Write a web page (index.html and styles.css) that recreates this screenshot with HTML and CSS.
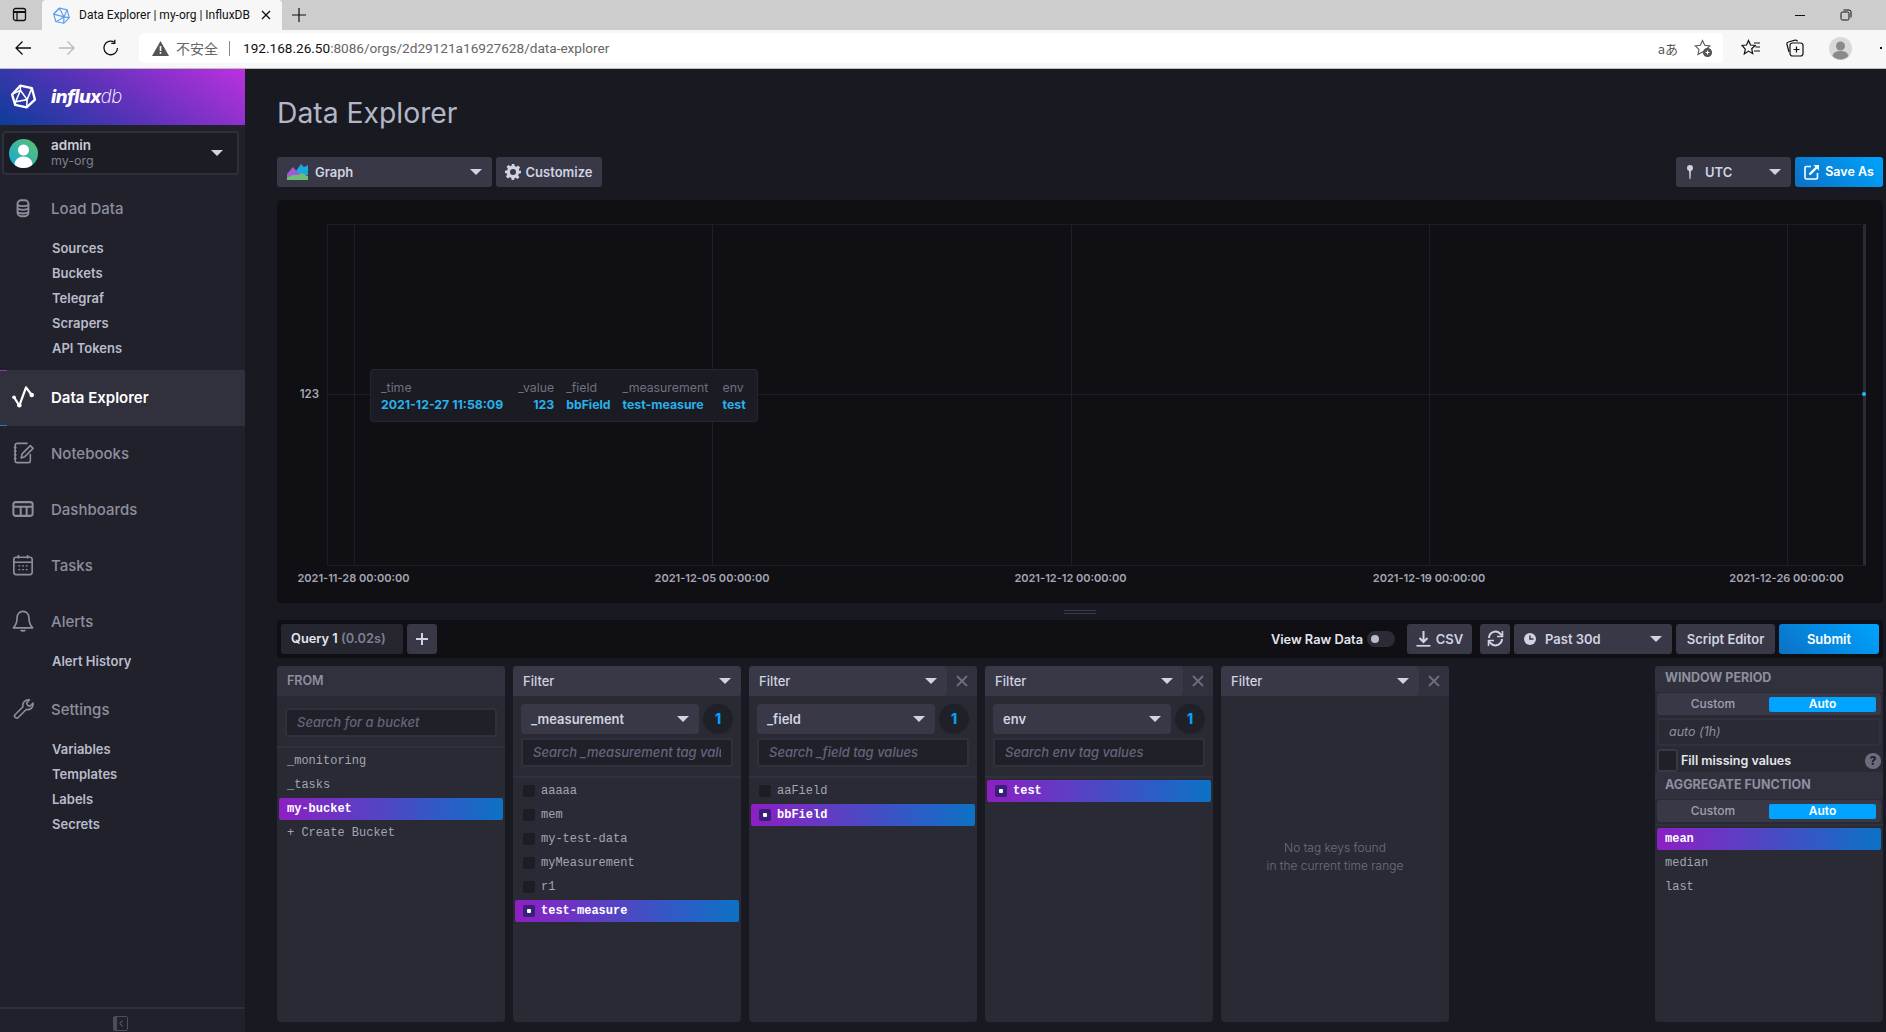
FILE: index.html
```html
<!DOCTYPE html>
<html lang="en">
<head>
<meta charset="utf-8">
<title>Data Explorer | my-org | InfluxDB</title>
<link rel="stylesheet" href="styles.css">
</head>
<body>
<div class="tabstrip">
  <div class="tabstrip-btn">
    <svg width="16" height="16" viewBox="0 0 16 16" fill="none" stroke="#111" stroke-width="1.3"><rect x="1.5" y="1.5" width="12" height="12" rx="2"/><path d="M1.5 5h12" stroke-width="2"/><path d="M5 5v8"/></svg>
  </div>
  <div class="tab">
    <svg class="tab-fav" width="17" height="17" viewBox="0 0 24 24" fill="none" stroke="#5b9cf0" stroke-width="1.6" stroke-linejoin="round"><path d="M9 1.5 20 4l3 11-8 8-11-2.5L1 10z"/><path d="M9 1.5 15.5 14 4 21M1 10l14.5 4 7.5 1M20 4l-4.5 10M15.500 14 15 23M9 1.5 1 10"/></svg>
    <span class="tab-title">Data Explorer | my-org | InfluxDB</span>
    <svg width="10" height="10" viewBox="0 0 10 10" stroke="#111" stroke-width="1.3"><path d="M1 1l8 8M9 1l-8 8"/></svg>
  </div>
  <svg class="tab-new" width="14" height="14" viewBox="0 0 14 14" stroke="#111" stroke-width="1.2"><path d="M7 0v14M0 7h14"/></svg>
  <div class="win-btns">
    <svg width="12" height="12" viewBox="0 0 12 12" stroke="#111"><path d="M1 6.5h10"/></svg>
    <svg width="12" height="12" viewBox="0 0 12 12" fill="none" stroke="#111"><rect x="1" y="3" width="8" height="8" rx="1.5"/><path d="M3.5 1h5.500a2 2 0 0 1 2 2v5.500"/></svg>
  </div>
</div>
<div class="toolbar">
  <svg class="tb-back" width="18" height="18" viewBox="0 0 18 18" fill="none" stroke="#111" stroke-width="1.3"><path d="M17 9H2M8.5 2.5 2 9l6.5 6.5"/></svg>
  <svg class="tb-fwd" width="18" height="18" viewBox="0 0 18 18" fill="none" stroke="#bbb" stroke-width="1.3"><path d="M1 9h15M9.5 2.5 16 9l-6.5 6.5"/></svg>
  <svg class="tb-reload" width="18" height="18" viewBox="0 0 18 18" fill="none" stroke="#111" stroke-width="1.3"><path d="M15.5 9A6.8 6.8 0 1 1 12.5 3.3"/><path d="M12.8 0.8v3.5H9.300"/></svg>
  <div class="omnibox">
    <svg class="warn" width="17" height="15" viewBox="0 0 17 15"><path d="M8.5 0 17 15H0z" fill="#555"/><path d="M7.7 5h1.600v5H7.700zM7.700 11h1.600v1.700H7.700z" fill="#fff"/></svg>
    <span class="insecure">不安全</span>
    <span class="omni-sep"></span>
    <span class="url"><span class="url-host">192.168.26.50</span>:8086/orgs/2d29121a16927628/data-explorer</span>
    <span class="omni-right">
      <span class="translate">aあ</span>
      <svg width="19" height="19" viewBox="0 0 19 19" fill="none" stroke="#555" stroke-width="1.1"><path d="M8.5 1.5l2.200 4.800 5.100.6-3.800 3.500 1 5-4.500-2.500L4 15.400l1-5L1.200 6.900l5.100-.6z"/><circle cx="13.5" cy="13.5" r="4" fill="#555"/><path d="M11.5 13.5h4M13.5 11.5v4" stroke="#fff"/></svg>
    </span>
  </div>
  <div class="tb-right">
    <svg width="20" height="18" viewBox="0 0 20 18" fill="none" stroke="#111" stroke-width="1.2"><path d="M7.5 1.5l2 4.500 4.700.5-3.500 3.200 1 4.800-4.200-2.400L3.300 15l1-4.800L1 6.500 5.500 6zM13 4h6M14.500 8h4.500M13 12h6"/></svg>
    <svg width="18" height="18" viewBox="0 0 18 18" fill="none" stroke="#111" stroke-width="1.2"><rect x="4" y="4" width="13" height="13" rx="2.5"/><path d="M3 13 1 5.500a2 2 0 0 1 1.500-2.500L9 1.200a2 2 0 0 1 2.500 1.300M10.500 7.500v6M7.500 10.500h6"/></svg>
    <svg class="profile" width="23" height="23" viewBox="0 0 23 23"><circle cx="11.5" cy="11.5" r="11.5" fill="#d9d9d9"/><circle cx="11.5" cy="9" r="4.5" fill="#8a8a8a"/><path d="M3.5 19c1-4 4-5 8-5s7 1 8 5a11 11 0 0 1-16 0z" fill="#8a8a8a"/></svg>
    <span class="more-dots"><i></i><i></i></span>
  </div>
</div>

<div class="app">
  <aside class="sidebar">
    <div class="brand">
      <svg class="brand-logo" width="25" height="25" viewBox="0 0 24 24" fill="none" stroke="#fff" stroke-width="2.2" stroke-linejoin="round"><path d="M9 1.5 20 4l3 11-8 7.500-11-2.500L1 10z"/><path d="M9 6 15.5 15 4.500 17zM9 1.500V6M20 4l-4.500 11M15.500 15l-.5 7.500M4.500 17 4 20M1 10l8-4" stroke-width="1.5"/></svg>
      <span class="brand-name"><b>influx</b>db</span>
    </div>
    <div class="user">
      <svg class="avatar" width="29" height="29" viewBox="0 0 29 29">
        <defs><linearGradient id="ava" x1="1" y1="0" x2="0" y2="1"><stop offset="0" stop-color="#5ec46f"/><stop offset="1" stop-color="#14a7d8"/></linearGradient><clipPath id="avac"><circle cx="14.5" cy="14.5" r="14.5"/></clipPath></defs>
        <circle cx="14.5" cy="14.5" r="14.5" fill="url(#ava)"/>
        <g clip-path="url(#avac)" fill="#fff"><circle cx="14.5" cy="11" r="5.5"/><ellipse cx="14.5" cy="25" rx="9" ry="7.5"/></g>
      </svg>
      <div class="user-text"><div class="user-name">admin</div><div class="user-org">my-org</div></div>
      <span class="caret user-caret"></span>
    </div>
    <nav class="nav">
      <a class="nav-item">
        <svg class="nav-ico" viewBox="0 0 24 24" fill="none" stroke="#8d8f9f" stroke-width="2"><rect x="6" y="3.500" width="12" height="17.500" rx="4"/><path d="M6 8.500c2 2 10 2 12 0M6 12.500c2 2 10 2 12 0M6 16.500c2 2 10 2 12 0"/></svg>
        <span>Load Data</span>
      </a>
      <div class="sub sub-a"><a>Sources</a><a>Buckets</a><a>Telegraf</a><a>Scrapers</a><a>API Tokens</a></div>
      <a class="nav-item active">
        <svg class="nav-ico" viewBox="0 0 24 24" fill="none" stroke="#fff" stroke-width="2.4" stroke-linecap="round" stroke-linejoin="round"><path d="M2.200 12.300 8 21.500 15.300 1.500l6.200 8.300"/><g fill="#fff" stroke="none"><circle cx="2.200" cy="12.300" r="2"/><circle cx="8" cy="21" r="2.500"/><circle cx="21.500" cy="9.800" r="2.500"/></g></svg>
        <span>Data Explorer</span>
      </a>
      <a class="nav-item">
        <svg class="nav-ico" viewBox="0 0 24 24" fill="none" stroke="#8d8f9f" stroke-width="1.7" stroke-linejoin="round"><path d="M17 1.500H5.500a2 2 0 0 0-2 2v17a2 2 0 0 0 2 2H18a2 2 0 0 0 2-2V13"/><path d="M2 6h3M2 10h3M2 14h3M2 18h3"/><path d="M10 17.500l1-4.500 9-9 3 3-9 9z"/></svg>
        <span>Notebooks</span>
      </a>
      <a class="nav-item">
        <svg class="nav-ico" viewBox="0 0 24 24" fill="none" stroke="#8d8f9f" stroke-width="2.2"><rect x="1.500" y="4.500" width="21" height="15" rx="2.500"/><path d="M1.500 9.500h21M9.500 9.500v10M16 9.500v10"/></svg>
        <span>Dashboards</span>
      </a>
      <a class="nav-item">
        <svg class="nav-ico" viewBox="0 0 24 24" fill="none" stroke="#8d8f9f" stroke-width="1.8"><rect x="2" y="3.500" width="20" height="19" rx="2.500"/><path d="M2 9h20M7 1v4M17 1v4"/><path d="M7 13h2M11 13h2M15 13h2M7 17h2M11 17h2M15 17h2" stroke-width="1.500"/></svg>
        <span>Tasks</span>
      </a>
      <a class="nav-item">
        <svg class="nav-ico" viewBox="0 0 24 24" fill="none" stroke="#8d8f9f" stroke-width="1.8" stroke-linejoin="round"><path d="M12 1.500c-4 0-6.500 3-6.500 7 0 6-1 8-4 11h21c-3-3-4-5-4-11 0-4-2.500-7-6.500-7z"/><path d="M9.500 22c1 1 4 1 5 0"/></svg>
        <span>Alerts</span>
      </a>
      <div class="sub sub-b"><a>Alert History</a></div>
      <a class="nav-item">
        <svg class="nav-ico" viewBox="0 0 24 24" fill="none" stroke="#8d8f9f" stroke-width="1.7" stroke-linejoin="round"><path d="M3 18.500 12 9.500c-1-4 2-8 7-7.500l-3 3.500 1 2.500 2.500 1L23 5.500c.5 5-3.500 8-7.500 7l-9 9c-1.500 1.500-5-1.500-3.500-3z"/></svg>
        <span>Settings</span>
      </a>
      <div class="sub sub-c"><a>Variables</a><a>Templates</a><a>Labels</a><a>Secrets</a></div>
    </nav>
    <div class="collapse">
      <svg width="15" height="15" viewBox="0 0 15 15" fill="none"><rect x="0.5" y="0.5" width="14" height="14" rx="1.5" stroke="#4b4c5c"/><rect x="0.5" y="0.5" width="3.5" height="14" fill="#4b4c5c"/><path d="M9.500 4.500 7 7.500l2.500 3" stroke="#6b6d7e"/></svg>
    </div>
  </aside>

  <main class="main">
    <h1 class="page-title">Data Explorer</h1>
    <div class="controls">
      <button class="btn dd graph-dd">
        <svg class="graph-ico" width="21" height="16" viewBox="0 0 21 16"><path d="M0 11 5 5l4 2 5-7 3 3 4-2v10H0z" fill="#1ba6dc"/><path d="M0 10 6 3l5 6 4 1 6 2v4H0z" fill="#a657d8"/><path d="M0 13.500l6-2.500 5 0 4-2 6 3.500V16H0z" fill="#6cbf73"/></svg>
        <span class="grow">Graph</span><span class="caret"></span>
      </button>
      <button class="btn customize">
        <svg width="16" height="16" viewBox="0 0 24 24" fill="#d0d3e0"><path fill-rule="evenodd" d="M10 0h4l.7 3.400 2.200.9L19.800 2.400l2.800 2.800-1.900 2.900.9 2.200L24 10v4l-3.400.7-.9 2.200 1.900 2.900-2.800 2.800-2.900-1.900-2.200.9L14 24h-4l-.7-3.400-2.200-.9-2.900 1.900-2.800-2.800 1.900-2.900-.9-2.200L0 14v-4l3.400-.7.9-2.200L2.400 4.200l2.800-2.800 2.900 1.900 2.200-.9zM12 7.500a4.500 4.500 0 1 0 0 9 4.500 4.500 0 0 0 0-9z"/></svg>
        <span>Customize</span>
      </button>
      <span class="spacer"></span>
      <button class="btn dd utc-dd">
        <svg width="8" height="14" viewBox="0 0 8 14" fill="#cfd2df"><circle cx="4" cy="3" r="3"/><path d="M3 5h2l-.5 9h-1z"/></svg>
        <span class="grow utc-label">UTC</span><span class="caret"></span>
      </button>
      <button class="btn primary saveas">
        <svg width="16" height="16" viewBox="0 0 16 16" fill="none" stroke="#fff" stroke-width="1.6"><path d="M13.500 9v4.500a1.500 1.500 0 0 1-1.500 1.500H2.500A1.500 1.500 0 0 1 1 13.500V4a1.500 1.500 0 0 1 1.500-1.500H7"/><path d="M5.500 10.500 13 3" stroke-width="2.4"/><path d="M9.500 1h5.500v5.500z" fill="#fff" stroke="none"/></svg>
        <span>Save As</span>
      </button>
    </div>

    <section class="chart">
      <div class="plot">
        <i class="grid-v" style="left:25.5px"></i>
        <i class="grid-v" style="left:384px"></i>
        <i class="grid-v" style="left:742.5px"></i>
        <i class="grid-v" style="left:1101px"></i>
        <i class="grid-v" style="left:1458.5px"></i>
        <i class="grid-h"></i>
        <i class="point"></i>
        <span class="y-tick">123</span>
        <span class="x-tick" style="left:25.5px">2021-11-28 00:00:00</span>
        <span class="x-tick" style="left:384px">2021-12-05 00:00:00</span>
        <span class="x-tick" style="left:742.5px">2021-12-12 00:00:00</span>
        <span class="x-tick" style="left:1101px">2021-12-19 00:00:00</span>
        <span class="x-tick" style="left:1458.5px">2021-12-26 00:00:00</span>
        <div class="tooltip">
          <div class="tt-col"><span>_time</span><b>2021-12-27 11:58:09</b></div>
          <div class="tt-col tt-right"><span>_value</span><b>123</b></div>
          <div class="tt-col"><span>_field</span><b>bbField</b></div>
          <div class="tt-col tt-meas"><span>_measurement</span><b>test-measure</b></div>
          <div class="tt-col"><span>env</span><b>test</b></div>
        </div>
      </div>
    </section>

    <div class="resizer"><i></i><i></i></div>

    <div class="query-bar">
      <div class="query-tab">Query 1 <span class="query-time">(0.02s)</span></div>
      <button class="btn add-q"><svg width="12" height="12" viewBox="0 0 12 12" stroke="#d0d3e0" stroke-width="2"><path d="M6 0v12M0 6h12"/></svg></button>
      <span class="spacer"></span>
      <span class="raw-label">View Raw Data</span>
      <span class="raw-toggle"><i></i></span>
      <button class="btn csv">
        <svg width="15" height="16" viewBox="0 0 15 16" fill="none" stroke="#d0d3e0" stroke-width="1.7"><path d="M7.500 0v10M3.500 7l4 4 4-4" stroke-width="2"/><path d="M0.500 14.800h14"/></svg>
        <span>CSV</span>
      </button>
      <button class="btn refresh">
        <svg width="17" height="17" viewBox="0 0 17 17" fill="none" stroke="#d0d3e0" stroke-width="2"><path d="M2 8a6.500 6.500 0 0 1 11-4.500L15 5.500M15 9a6.500 6.500 0 0 1-11 4.500L2 11.500"/><path d="M15.500 1v5.500H10M1.500 16v-5.500H7" stroke-width="1.6"/></svg>
      </button>
      <button class="btn dd past">
        <svg width="12" height="12" viewBox="0 0 12 12"><circle cx="6" cy="6" r="6" fill="#d0d3e0"/><path d="M6 2.500V6h3.500" fill="none" stroke="#383846" stroke-width="1.5"/></svg>
        <span class="grow">Past 30d</span><span class="caret"></span>
      </button>
      <button class="btn script">Script Editor</button>
      <button class="btn primary submit">Submit</button>
    </div>

    <div class="builder">
      <section class="card card-from">
        <header class="card-head from-head">FROM</header>
        <div class="card-tools"><div class="search"><span>Search for a bucket</span></div></div>
        <ul class="list">
          <li>_monitoring</li>
          <li>_tasks</li>
          <li class="sel">my-bucket</li>
          <li>+ Create Bucket</li>
        </ul>
      </section>

      <section class="card">
        <header class="card-head"><div class="head-dd"><span class="grow">Filter</span><span class="caret"></span></div></header>
        <div class="card-tools">
          <div class="key-row"><div class="key-dd"><span class="grow">_measurement</span><span class="caret"></span></div><span class="badge">1</span></div>
          <div class="search"><span>Search _measurement tag values</span></div>
        </div>
        <ul class="list check">
          <li><i class="box"></i>aaaaa</li>
          <li><i class="box"></i>mem</li>
          <li><i class="box"></i>my-test-data</li>
          <li><i class="box"></i>myMeasurement</li>
          <li><i class="box"></i>r1</li>
          <li class="sel"><i class="box"></i>test-measure</li>
        </ul>
      </section>

      <section class="card">
        <header class="card-head"><div class="head-dd short"><span class="grow">Filter</span><span class="caret"></span></div><span class="close"><svg width="12" height="12" viewBox="0 0 12 12" stroke="#6b6d7e" stroke-width="2"><path d="M1 1l10 10M11 1 1 11"/></svg></span></header>
        <div class="card-tools">
          <div class="key-row"><div class="key-dd"><span class="grow">_field</span><span class="caret"></span></div><span class="badge">1</span></div>
          <div class="search"><span>Search _field tag values</span></div>
        </div>
        <ul class="list check">
          <li><i class="box"></i>aaField</li>
          <li class="sel"><i class="box"></i>bbField</li>
        </ul>
      </section>

      <section class="card">
        <header class="card-head"><div class="head-dd short"><span class="grow">Filter</span><span class="caret"></span></div><span class="close"><svg width="12" height="12" viewBox="0 0 12 12" stroke="#6b6d7e" stroke-width="2"><path d="M1 1l10 10M11 1 1 11"/></svg></span></header>
        <div class="card-tools">
          <div class="key-row"><div class="key-dd"><span class="grow">env</span><span class="caret"></span></div><span class="badge">1</span></div>
          <div class="search"><span>Search env tag values</span></div>
        </div>
        <ul class="list check">
          <li class="sel"><i class="box"></i>test</li>
        </ul>
      </section>

      <section class="card card-empty">
        <header class="card-head"><div class="head-dd short"><span class="grow">Filter</span><span class="caret"></span></div><span class="close"><svg width="12" height="12" viewBox="0 0 12 12" stroke="#6b6d7e" stroke-width="2"><path d="M1 1l10 10M11 1 1 11"/></svg></span></header>
        <div class="empty">No tag keys found<br>in the current time range</div>
      </section>

      <span class="spacer"></span>

      <section class="card card-agg">
        <div class="agg-title agg-first">WINDOW PERIOD</div>
        <div class="seg"><span>Custom</span><span class="on">Auto</span></div>
        <div class="agg-input">auto (1h)</div>
        <div class="fill-row"><i class="fill-box"></i><span class="grow">Fill missing values</span><span class="help">?</span></div>
        <div class="agg-title agg-second">AGGREGATE FUNCTION</div>
        <div class="seg"><span>Custom</span><span class="on">Auto</span></div>
        <ul class="list agg-list">
          <li class="sel">mean</li>
          <li>median</li>
          <li>last</li>
        </ul>
      </section>
    </div>
  </main>
</div>
</body>
</html>
```

FILE: styles.css
```css
* { box-sizing: border-box; }
html, body { margin: 0; height: 100%; overflow: hidden; }
body {
  width: 1886px;
  height: 1032px;
  display: flex;
  flex-direction: column;
  font-family: Inter, "Noto Sans", sans-serif;
  background: #181921;
  color: #d0d3e0;
}
ul { list-style: none; margin: 0; padding: 0; }
button { font: inherit; border: 0; margin: 0; }
i { font-style: normal; display: block; }

/* browser chrome */
.tabstrip {
  height: 30px;
  background: #cdcdcd;
  display: flex;
  align-items: flex-end;
  flex: none;
}
.tabstrip-btn {
  width: 42px;
  height: 30px;
  display: flex;
  align-items: center;
  padding-left: 12px;
}
.tab {
  width: 240px;
  height: 30px;
  background: #f7f7f7;
  border-radius: 4px 4px 0 0;
  display: flex;
  align-items: center;
  padding: 0 11px;
  font: 12px Roboto, sans-serif;
  color: #111;
}
.tab-fav { flex: none; }
.tab-title { flex: 1; padding-left: 9px; white-space: nowrap; }
.tab-new { margin: 0 0 8px 10px; }
.win-btns {
  margin-left: auto;
  height: 30px;
  width: 92px;
  display: flex;
  align-items: center;
  gap: 34px;
}
.toolbar {
  height: 39px;
  background: #f7f7f7;
  border-bottom: 1px solid #bfbfbf;
  display: flex;
  align-items: center;
  padding: 0 0 2px 14px;
  flex: none;
  overflow: hidden;
  font: 13px Roboto, sans-serif;
}
.toolbar svg { flex: none; }
.tb-fwd { margin-left: 26px; }
.tb-reload { margin-left: 26px; }
.omnibox {
  margin-left: 19px;
  width: 1584px;
  flex: none;
  height: 30px;
  background: #fff;
  border-radius: 5px;
  display: flex;
  align-items: center;
  padding: 0 10px 0 13px;
  color: #666;
}
.insecure { font-family: "Noto Sans CJK SC", sans-serif; font-size: 14px; color: #666; margin-left: 7px; }
.omni-sep { width: 1px; height: 15px; background: #888; margin: 0 13px 0 11px; }
.url { white-space: nowrap; font-size: 13.6px; }
.url-host { color: #111; }
.omni-right { margin-left: auto; display: flex; align-items: center; gap: 16px; }
.translate { font-family: "Noto Sans CJK JP", sans-serif; font-size: 13px; color: #555; }
.tb-right { display: flex; align-items: center; margin-left: 18px; gap: 25px; flex: none; }
.more-dots { display: flex; gap: 4px; margin-left: 3px; }
.more-dots i { width: 2px; height: 2px; background: #111; }

/* app */
.app { flex: 1; display: flex; min-height: 0; }
.sidebar {
  width: 245px;
  flex: none;
  background: #20212a;
  display: flex;
  flex-direction: column;
}
.brand {
  height: 56px;
  background: linear-gradient(35deg, #0b3d99 0%, #5a32b8 45%, #bb31df 100%);
  display: flex;
  align-items: center;
  padding: 0 0 1px 11px;
  flex: none;
}
.brand-name {
  margin-left: 15px;
  font-size: 18.5px;
  font-style: italic;
  font-weight: 200;
  color: #fff;
  letter-spacing: -0.5px;
  padding-bottom: 1px;
}
.brand-name b { font-weight: 800; }
.user {
  margin: 6px 6px 0 2px;
  height: 44px;
  border: 2px solid #2e2f3a;
  border-radius: 4px;
  background: #1c1d24;
  display: flex;
  align-items: center;
  padding-left: 5px;
  flex: none;
}
.user-text { flex: 1; margin-left: 13px; line-height: 16px; }
.user-name { font-size: 13.5px; font-weight: 600; color: #c9ccd9; }
.user-org { font-size: 12.5px; font-weight: 400; color: #7d7f8f; }
.user-caret { margin-right: 14px; }
.caret {
  flex: none;
  width: 0;
  height: 0;
  border-left: 6px solid transparent;
  border-right: 6px solid transparent;
  border-top: 6px solid #d0d3e0;
}
.nav { flex: 1; padding-top: 5px; }
.nav-item {
  height: 56px;
  display: flex;
  align-items: center;
  padding: 0 0 2px 12px;
  font-size: 15px;
  font-weight: 500;
  color: #8d8f9f;
}
.nav-item:first-child { padding-bottom: 0; }
.nav-ico { width: 22px; height: 22px; flex: none; margin-right: 17px; }
.nav-item.active {
  position: relative;
  background: #30313d;
  color: #fff;
  font-weight: 600;
}
.nav-item.active::before, .nav-item.active::after {
  content: "";
  position: absolute;
  left: 0;
  width: 7px;
  height: 1px;
}
.nav-item.active::before { top: 0; background: #9b2bc8; }
.nav-item.active::after { bottom: 0; background: #0a84d8; }
.sub a {
  display: block;
  height: 25px;
  line-height: 25px;
  padding-left: 52px;
  font-size: 13px;
  font-weight: 600;
  color: #b9bccb;
}
.sub-a { margin-bottom: 9px; }
.sub-b { margin: -1px 0 8px; }
.sub-c { margin-top: -1px; }
.collapse {
  height: 25px;
  border-top: 2px solid #30313d;
  display: flex;
  align-items: center;
  justify-content: center;
  padding: 6px 5px 0 0;
  flex: none;
}

/* main */
.main { flex: 1; min-width: 0; padding: 0 3px 10px 32px; display: flex; flex-direction: column; }
.page-title {
  margin: 0;
  height: 88px;
  padding-top: 26px;
  font-size: 28.3px;
  line-height: 36px;
  font-weight: 400;
  color: #b3b6c6;
}
.btn {
  height: 30px;
  border-radius: 3px;
  background: #383846;
  color: #d0d3e0;
  font-size: 13px;
  font-weight: 600;
  display: flex;
  align-items: center;
  justify-content: center;
  gap: 5px;
  padding: 0 0 1px;
  flex: none;
}
.btn.dd { justify-content: flex-start; padding: 0 10px 1px; }
.grow { flex: 1; text-align: left; }
.spacer { flex: 1; }
.primary { background: linear-gradient(45deg, #0b72c5, #00a3ff); color: #fff; }
.controls { display: flex; gap: 4px; height: 30px; flex: none; }
.graph-dd { width: 215px; }
.graph-dd .grow { margin-left: 2px; }
.customize { width: 106px; padding-right: 1px; }
.utc-dd { width: 115px; }
.utc-label { margin-left: 6px; }
.saveas { width: 88px; font-size: 12.5px; }

.chart {
  margin-top: 13px;
  height: 403px;
  flex: none;
  background: #0f0f14;
  border-radius: 4px;
  padding: 24px 17px 37px 50px;
}
.plot {
  position: relative;
  height: 100%;
  border: 1px solid #1c1c23;
  border-right: 3px solid #2a2b34;
}
.grid-v { position: absolute; top: 0; bottom: 0; width: 1px; background: #1f2027; }
.grid-h { position: absolute; left: 0; right: 0; top: 169px; height: 1px; background: #1f2027; }
.point {
  position: absolute;
  right: -3px;
  top: 167px;
  width: 4px;
  height: 4px;
  border-radius: 50%;
  background: #22b7f5;
}
.y-tick {
  position: absolute;
  right: 100%;
  margin-right: 9px;
  top: 162px;
  font-size: 11.5px;
  line-height: 15px;
  font-weight: 600;
  color: #a5a7b4;
}
.x-tick {
  position: absolute;
  top: 100%;
  transform: translateX(-50%);
  margin-top: 6px;
  font-size: 11px;
  line-height: 15px;
  font-weight: 600;
  color: #a5a7b4;
  white-space: nowrap;
}
.tooltip {
  position: absolute;
  left: 42px;
  top: 144px;
  width: 388px;
  height: 53px;
  background: #1a1b23;
  border: 1px solid #24252e;
  border-radius: 3px;
  padding: 9px 0 0 10px;
  display: flex;
  gap: 12px;
  font-size: 12.3px;
  line-height: 17px;
  white-space: nowrap;
}
.tt-col { display: flex; flex-direction: column; }
.tt-col span { color: #6f7080; font-weight: 400; }
.tt-col b { color: #28b1eb; font-weight: 700; }
.tt-right { text-align: right; min-width: 39px; }
.tt-meas { min-width: 88px; }

.resizer {
  height: 17px;
  flex: none;
  display: flex;
  flex-direction: column;
  align-items: center;
  justify-content: center;
  gap: 2px;
}
.resizer i { width: 32px; height: 1px; background: #383846; }

.query-bar {
  height: 38px;
  background: #0f0f14;
  border-radius: 4px;
  display: flex;
  align-items: center;
  padding: 0 4px;
  gap: 4px;
  flex: none;
}
.query-tab {
  width: 122px;
  height: 30px;
  background: #252630;
  border-radius: 3px;
  font-size: 12.8px;
  font-weight: 600;
  color: #e4e6ee;
  line-height: 29px;
  padding-left: 10px;
}
.query-time { color: #7d7f8f; }
.add-q { width: 30px; }
.raw-label { font-size: 12.8px; font-weight: 600; color: #e4e6ee; }
.raw-toggle {
  width: 28px;
  height: 16px;
  background: #2a2b34;
  border-radius: 8px;
  padding: 4px;
  margin-right: 8px;
}
.raw-toggle i { width: 8px; height: 8px; border-radius: 50%; background: #b9bccb; }
.csv { width: 65px; margin-right: 4px; }
.refresh { width: 30px; }
.past { width: 158px; }
.past .grow { margin-left: 4px; }
.script { width: 99px; }
.submit { width: 100px; }

/* builder */
.builder { margin-top: 8px; flex: 1; min-height: 0; display: flex; gap: 8px; }
.card {
  width: 228px;
  flex: none;
  background: #292a33;
  border-radius: 4px;
  overflow: hidden;
  display: flex;
  flex-direction: column;
}
.card-head {
  height: 30px;
  background: #30313c;
  display: flex;
  align-items: center;
  flex: none;
}
.from-head {
  padding: 0 0 2px 10px;
  font-size: 12.5px;
  font-weight: 600;
  color: #8d8f9f;
}
.head-dd {
  flex: 1;
  height: 30px;
  background: #383846;
  border-radius: 0 4px 4px 0;
  display: flex;
  align-items: center;
  padding: 0 10px;
  font-size: 13px;
  font-weight: 500;
  color: #d0d3e0;
}
.head-dd.short { flex: none; width: 198px; }
.close {
  flex: 1;
  display: flex;
  align-items: center;
  justify-content: center;
}
.card-tools {
  padding: 8px 8px 9px;
  border-bottom: 2px solid #30313c;
  display: flex;
  flex-direction: column;
  gap: 4px;
  flex: none;
}
.card-from .card-tools { padding-top: 12px; }
.key-row { display: flex; gap: 4px; }
.key-dd {
  flex: 1;
  height: 30px;
  background: #383846;
  border-radius: 4px;
  display: flex;
  align-items: center;
  padding: 0 10px 1px;
  font-size: 13px;
  font-weight: 600;
  color: #d0d3e0;
}
.badge {
  width: 30px;
  height: 30px;
  border-radius: 50%;
  background: #1f2028;
  color: #00a3ff;
  font-size: 14px;
  font-weight: 800;
  text-align: center;
  line-height: 29px;
  flex: none;
}
.search {
  height: 29px;
  background: #1f2028;
  border: 2px solid #30313c;
  border-radius: 3px;
  padding: 0 10px;
  font-size: 13px;
  line-height: 25px;
  font-style: italic;
  font-weight: 500;
  color: #63657a;
  white-space: nowrap;
}
.search span { display: block; overflow: hidden; }
.list { padding: 1px 2px 2px; font: 12px/24px "Liberation Mono", monospace; color: #a3a5b3; }
.list li { height: 24px; padding-left: 8px; white-space: pre; display: flex; align-items: center; }
.list li.sel {
  height: 22px;
  margin: 1px 0;
  border-radius: 2px;
  background: linear-gradient(90deg, #8e1fc3, #0b72c5);
  color: #fff;
  font-weight: 700;
}
.box {
  width: 12px;
  height: 12px;
  border-radius: 2px;
  background: #1c1d25;
  margin-right: 6px;
  flex: none;
}
.sel .box {
  background: #3a1f78 radial-gradient(circle, #fff 0 2px, transparent 2.5px);
}
.empty {
  flex: 1;
  padding-top: 143px;
  text-align: center;
  font-size: 12px;
  line-height: 18px;
  font-weight: 300;
  color: #6d6f80;
}
.agg-title {
  height: 27px;
  padding: 0 10px;
  font-size: 12.5px;
  font-weight: 700;
  color: #8d8f9f;
  line-height: 25px;
  background: #30313c;
  flex: none;
}
.agg-first { height: 26px; line-height: 24px; }
.seg {
  height: 22px;
  margin: 1px 2px 1px;
  padding: 4px 5px 3px 0;
  background: #383846;
  border-radius: 3px;
  display: flex;
  font-size: 12px;
  font-weight: 500;
  color: #9fa1b0;
  flex: none;
}
.seg span { flex: 1; text-align: center; line-height: 14px; }
.seg .on {
  flex: none;
  width: 107px;
  background: #00a3ff;
  color: #fff;
  border-radius: 2px;
  font-weight: 600;
}
.agg-input {
  height: 28px;
  margin: 2px 2px 3px;
  border: 2px solid #30313c;
  border-radius: 3px;
  padding-left: 10px;
  font-size: 12.5px;
  line-height: 23px;
  font-style: italic;
  color: #8d8f9f;
  flex: none;
}
.fill-row {
  height: 23px;
  padding: 0 2px;
  display: flex;
  align-items: center;
  font-size: 12.5px;
  font-weight: 600;
  color: #e4e6ee;
  flex: none;
}
.fill-box {
  width: 21px;
  height: 23px;
  border: 2px solid #383846;
  border-radius: 3px;
  background: #1f2028;
  margin-right: 3px;
}
.help {
  width: 16px;
  height: 16px;
  border-radius: 50%;
  background: #6b6d7e;
  color: #20212a;
  font-size: 12px;
  font-weight: 800;
  text-align: center;
  line-height: 16px;
}
.agg-list { border-top: 2px solid #30313c; margin-top: 1px; }
.agg-list li.sel { margin: 1px 0 1px; }
```
